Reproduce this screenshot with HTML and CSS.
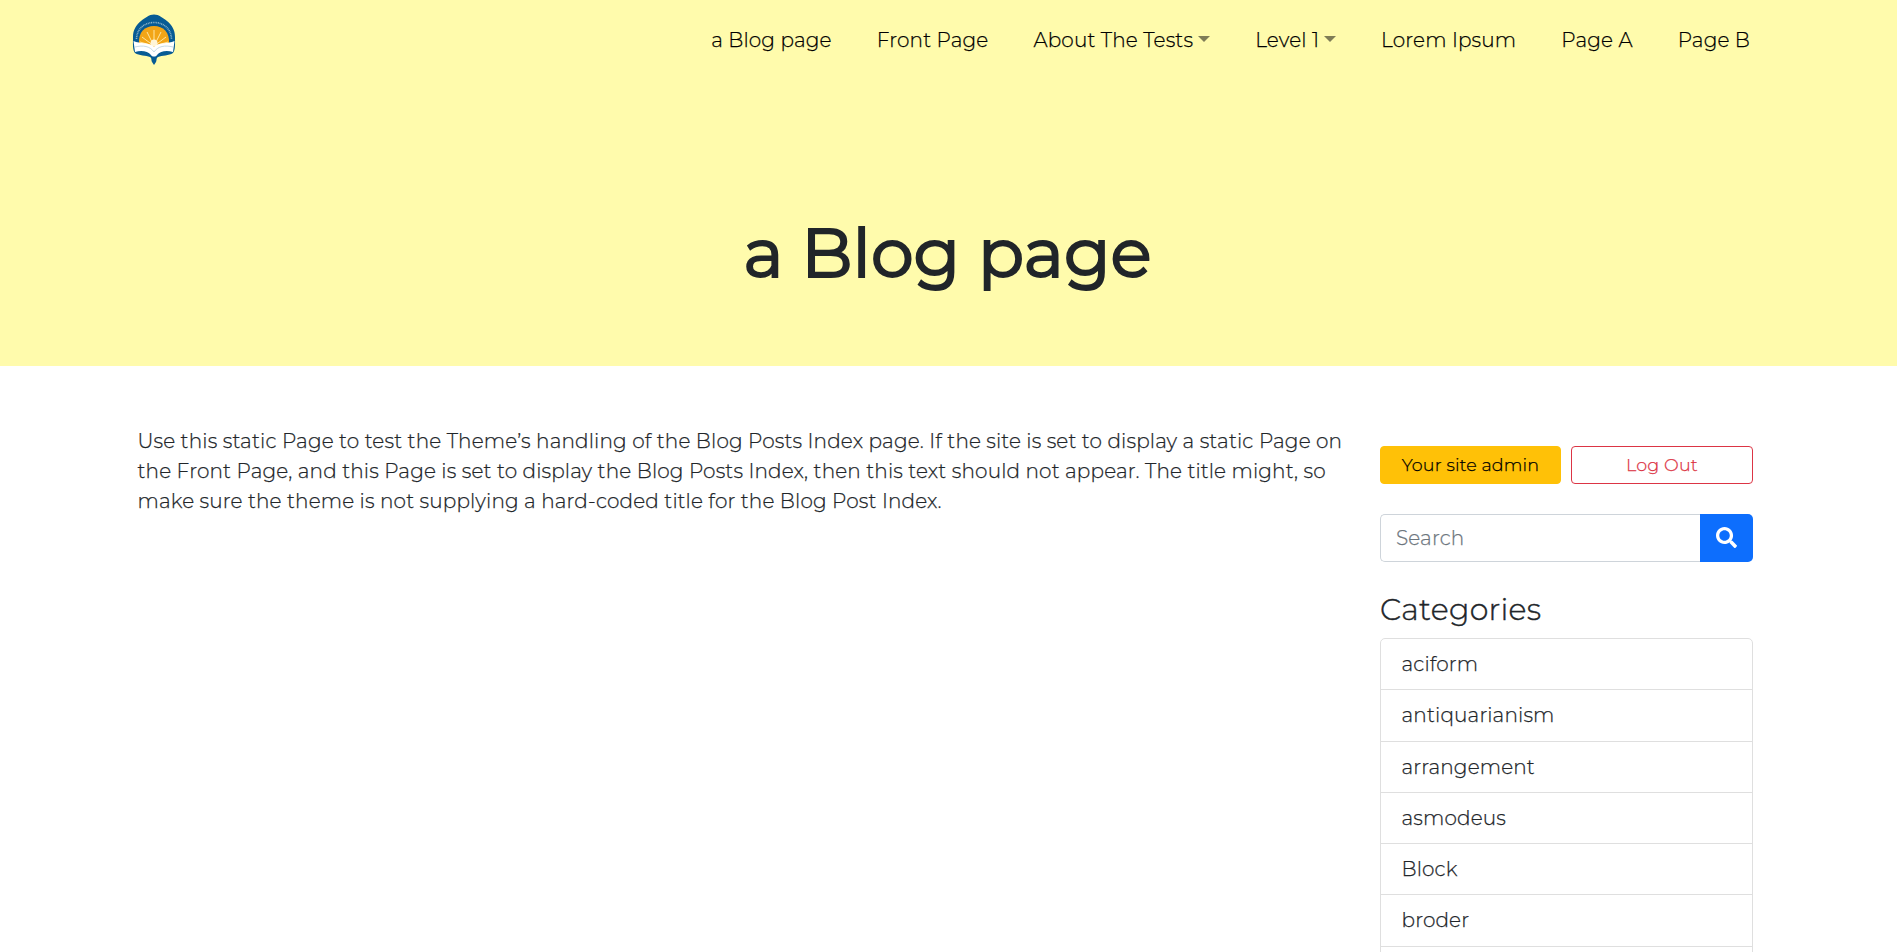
FILE: index.html
```html
<!DOCTYPE html>
<html lang="en">
<head>
<meta charset="utf-8">
<title>a Blog page</title>
<link rel="stylesheet" href="styles.css">
</head>
<body>
<header class="hero">
  <nav class="navbar">
    <a class="brand" href="#" aria-label="Home">
      <svg width="44" height="52" viewBox="0 0 44 52">
        <path d="M22 .5C17 .5 13 4 9 7C4 11 1 16 1 23C1 30 .5 36 3 39C7 42 14 41 18 43C20 44 19 46 20 48L22 51L24 48C25 46 24 44 26 43C30 41 37 42 41 39C43.500 36 43 30 43 23C43 16 40 11 35 7C31 4 27 .5 22 .5Z" fill="#075b94"/>
        <path d="M4.500 25C5 14 13 8.500 22 8.500S39 14 39.500 25" fill="none" stroke="#8cb5ca" stroke-width="1.600" stroke-dasharray="1 .7"/>
        <path d="M7 30C6 18 13 12 22 12S38 18 37 30L22 35Z" fill="#f2a516"/>
        <path d="M22 32V16M22 32L15 18M22 32L29 18M22 32L10 23M22 32L34 23M22 32L8 28M22 32L36 28" stroke="#ffe6a0" stroke-width="1"/>
        <circle cx="22" cy="29" r="3.500" fill="#fff5d8"/>
        <path d="M1.500 27C8 30 18 28 22 33C26 28 36 30 42.500 27L41 38C35 36 28 37 25 41C24 43 20 43 19 41C16 37 9 36 3 38Z" fill="#fff"/>
        <path d="M3 33C11 31 18 32 22 38C26 32 33 31 41 33" fill="none" stroke="#b9cfda" stroke-width=".8"/>
      </svg>
    </a>
    <ul class="menu">
      <li><a href="#">a Blog page</a></li>
      <li><a href="#">Front Page</a></li>
      <li><a href="#">About The Tests</a><i class="caret"></i></li>
      <li><a href="#">Level 1</a><i class="caret"></i></li>
      <li><a href="#">Lorem Ipsum</a></li>
      <li><a href="#">Page A</a></li>
      <li><a href="#">Page B</a></li>
    </ul>
  </nav>
  <h1 class="title">a Blog page</h1>
</header>
<div class="layout">
  <main class="content">
    <p><span>Use this static Page to test the Theme’s handling of the Blog Posts Index page. If the site is set to display a static Page on</span> <span>the Front Page, and this Page is set to display the Blog Posts Index, then this text should not appear. The title might, so</span> <span>make sure the theme is not supplying a hard-coded title for the Blog Post Index.</span></p>
  </main>
  <aside class="sidebar">
    <div class="actions">
      <a class="btn btn-admin" href="#">Your site admin</a>
      <a class="btn btn-logout" href="#">Log Out</a>
    </div>
    <form class="search">
      <input class="field" type="text" placeholder="Search">
      <button class="go" type="button" aria-label="Search"><svg width="21" height="21" viewBox="0 0 512 512"><path fill="#fff" d="M505 442.700L405.300 343c-4.500-4.500-10.600-7-17-7H372c27.600-35.300 44-79.700 44-128C416 93.100 322.900 0 208 0S0 93.100 0 208s93.100 208 208 208c48.300 0 92.700-16.400 128-44v16.300c0 6.400 2.500 12.500 7 17l99.700 99.700c9.400 9.400 24.600 9.400 33.900 0l28.300-28.300c9.400-9.400 9.400-24.600.1-34zM208 336c-70.700 0-128-57.200-128-128 0-70.700 57.200-128 128-128 70.700 0 128 57.200 128 128 0 70.700-57.200 128-128 128z"/></svg></button>
    </form>
    <h2 class="heading">Categories</h2>
    <ul class="list">
      <li>aciform</li>
      <li>antiquarianism</li>
      <li>arrangement</li>
      <li>asmodeus</li>
      <li>Block</li>
      <li>broder</li>
      <li></li>
    </ul>
  </aside>
</div>
</body>
</html>
```
FILE: styles.css
```css
* { box-sizing: border-box; }
html { height: 100%; overflow: hidden; }
body {
  margin: 0;
  height: 100%;
  overflow: hidden;
  background: #fff;
  color: #212529;
  font: 300 20px/30px Montserrat, Inter, sans-serif;
  letter-spacing: 0.15px;
  -webkit-text-stroke-width: 0.25px;
}
a { color: inherit; text-decoration: none; }
ul { list-style: none; margin: 0; padding: 0; }
.hero { height: 366px; background: #fffbac; }
.navbar {
  display: flex;
  justify-content: space-between;
  align-items: center;
  height: 80px;
  padding: 0 147px 0 132px;
}
.brand { display: flex; }
.menu { display: flex; gap: 45px; color: #000; white-space: nowrap; }
.menu li { display: flex; align-items: center; }
.caret {
  margin: 0 0 2px 5px;
  border: 6px solid transparent;
  border-top-color: #7f7d56;
  border-bottom: 0;
}
.title {
  margin: 0;
  padding-top: 130px;
  font-size: 68px;
  font-weight: 400;
  line-height: 86px;
  letter-spacing: 0;
  text-align: center;
  text-indent: -2px;
  -webkit-text-stroke-width: 2px;
}
.layout { display: flex; justify-content: space-between; padding: 60px 144px 0 137.5px; }
.content p { margin: 0; }
.content span { display: block; white-space: nowrap; }
.sidebar { width: 373px; padding-top: 20px; }
.actions { display: flex; gap: 10px; }
.btn {
  height: 38px;
  border: 1px solid;
  border-radius: 4px;
  font-size: 17.5px;
  line-height: 36px;
  text-align: center;
}
.btn-admin { width: 181px; background: #ffc107; border-color: #ffc107; color: #000; }
.btn-logout { width: 182px; border-color: #dc3545; color: #dc3545; }
.search { display: flex; height: 48px; margin-top: 30px; }
.field {
  flex: 1;
  min-width: 0;
  padding: 0 15px;
  border: 1px solid #ced4da;
  border-right: 0;
  border-radius: 5px 0 0 5px;
  font: inherit;
  letter-spacing: inherit;
  background: #fff;
}
.field::placeholder { color: #6c757d; opacity: 1; }
.go {
  display: flex;
  justify-content: center;
  align-items: center;
  width: 53px;
  padding: 0 0 2px;
  border: 0;
  border-radius: 0 5px 5px 0;
  background: #0d6efd;
}
.heading {
  margin: 30px 0 10px;
  font-size: 30px;
  font-weight: 300;
  line-height: 36px;
  letter-spacing: 0.3px;
  -webkit-text-stroke-width: 0.4px;
}
.list { border: 1px solid #dfdfdf; border-radius: 5px; }
.list li { height: 51.25px; padding: 10px 20.5px; border-bottom: 1px solid #dfdfdf; }
```
